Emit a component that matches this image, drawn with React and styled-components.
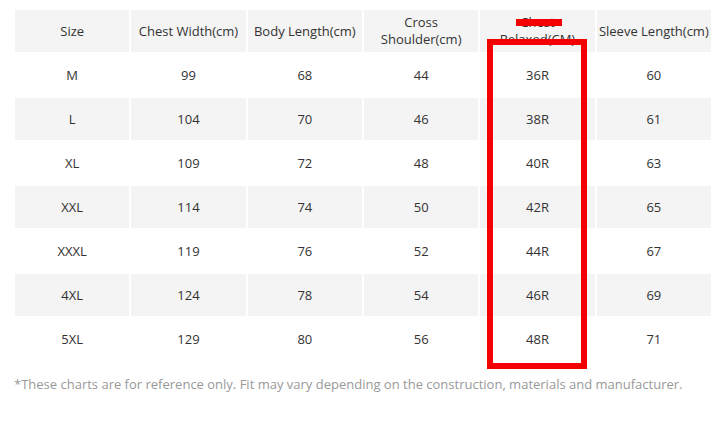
import React from "react";
import styled, { createGlobalStyle } from "styled-components";

const Global = createGlobalStyle`
  body {
    margin: 0;
    background: #fff;
    font-family: "Open Sans", "Liberation Sans", sans-serif;
  }
`;

const Page = styled.div`
  position: relative;
  width: 725px;
  height: 435px;
  padding: 8px 0 0 13px;
  box-sizing: border-box;
`;

const Table = styled.table`
  width: 700px;
  table-layout: fixed;
  border-collapse: separate;
  border-spacing: 2px;
  font-size: 13px;
  color: #333;
`;

const Row = styled.tr`
  height: 42px;
  background: ${(p) => (p.shaded ? "#f4f4f4" : "#fff")};
`;

const Head = styled.th`
  font-weight: 400;
  padding: 0;
  text-align: center;
  vertical-align: middle;
  line-height: 17px;
`;

const Cell = styled.td`
  padding: 0;
  text-align: center;
  vertical-align: middle;
`;

const Note = styled.p`
  margin: 13px 0 0 1px;
  font-size: 13px;
  color: #999;
  letter-spacing: 0;
`;

const Box = styled.div`
  position: absolute;
  left: 487px;
  top: 39px;
  width: 100px;
  height: 330px;
  box-sizing: border-box;
  border: 6px solid #f40000;
`;

const Strike = styled.div`
  position: absolute;
  left: 516px;
  top: 19px;
  width: 46px;
  height: 7px;
  background: #f40000;
`;

const headers = [
  "Size",
  "Chest Width(cm)",
  "Body Length(cm)",
  ["Cross", "Shoulder(cm)"],
  ["Chest", "Relaxed(CM)"],
  "Sleeve Length(cm)",
];

const rows = [
  ["M", 99, 68, 44, "36R", 60],
  ["L", 104, 70, 46, "38R", 61],
  ["XL", 109, 72, 48, "40R", 63],
  ["XXL", 114, 74, 50, "42R", 65],
  ["XXXL", 119, 76, 52, "44R", 67],
  ["4XL", 124, 78, 54, "46R", 69],
  ["5XL", 129, 80, 56, "48R", 71],
];

export default function App() {
  return (
    <Page>
      <Global />
      <Table>
        <thead>
          <Row shaded>
            {headers.map((h, i) => (
              <Head key={i}>
                {Array.isArray(h) ? (
                  <>
                    {h[0]}
                    <br />
                    {h[1]}
                  </>
                ) : (
                  h
                )}
              </Head>
            ))}
          </Row>
        </thead>
        <tbody>
          {rows.map((r, i) => (
            <Row key={r[0]} shaded={i % 2 === 1}>
              {r.map((v, j) => (
                <Cell key={j}>{v}</Cell>
              ))}
            </Row>
          ))}
        </tbody>
      </Table>
      <Note>
        *These charts are for reference only. Fit may vary depending on the
        construction, materials and manufacturer.
      </Note>
      <Strike />
      <Box />
    </Page>
  );
}
